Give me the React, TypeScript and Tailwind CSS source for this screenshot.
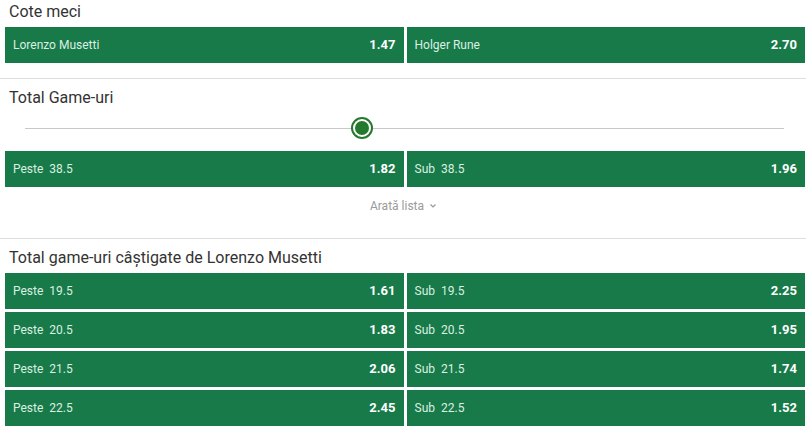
type Odd = { label: string; line?: string; odd: string }

function OddButton({ label, line, odd }: Odd) {
    return (
        <div className="flex-1 h-[36px] bg-[#177a48] flex items-center justify-between px-[8px]">
            <div className="flex items-center gap-[6px] text-[12px] text-[#dcefe3]">
                <span>{label}</span>
                {line && <span>{line}</span>}
            </div>
            <span className="text-[13px] font-bold text-white">{odd}</span>
        </div>
    )
}

function Row({ left, right }: { left: Odd; right: Odd }) {
    return (
        <div className="flex gap-[3px] pl-[5px] pr-[1px]">
            <OddButton {...left} />
            <OddButton {...right} />
        </div>
    )
}

const musetti = [
    ["19.5", "1.61", "2.25"],
    ["20.5", "1.83", "1.95"],
    ["21.5", "2.06", "1.74"],
    ["22.5", "2.45", "1.52"],
]

export default function App() {
    return (
        <div className="w-[806px] h-[430px] bg-white overflow-hidden" style={{ fontFamily: "Roboto, 'Liberation Sans', sans-serif" }}>
            {/* Cote meci */}
            <div className="h-[24px] leading-[24px] pl-[9px] text-[16px] text-[#333]">Cote meci</div>
            <div className="mt-[3px]">
                <Row left={{ label: "Lorenzo Musetti", odd: "1.47" }} right={{ label: "Holger Rune", odd: "2.70" }} />
            </div>
            <div className="mt-[15px] h-px bg-[#dedede]" />

            {/* Total game-uri */}
            <div className="mt-[7px] h-[24px] leading-[24px] pl-[9px] text-[16px] text-[#333]">Total Game-uri</div>
            <div className="h-[36px] flex items-center px-[25px] pr-[22px]">
                <div className="relative flex-1 h-px bg-[#c8c8c8]">
                    <div className="absolute left-[326px] top-[-11px] w-[22px] h-[22px] rounded-full border-2 border-[#25792f] bg-white flex items-center justify-center">
                        <div className="w-[14px] h-[14px] rounded-full bg-[#25792f]" />
                    </div>
                </div>
            </div>
            <div className="mt-[5px]">
                <Row left={{ label: "Peste", line: "38.5", odd: "1.82" }} right={{ label: "Sub", line: "38.5", odd: "1.96" }} />
            </div>
            <div className="mt-[11px] h-[16px] flex items-center justify-center gap-[6px] text-[12px] text-[#9a9a9a]">
                <span>Arată lista</span>
                <svg width="6" height="4" viewBox="0 0 6 4">
                    <path d="M0.5 0.5 L3 3 L5.5 0.5" stroke="#9a9a9a" strokeWidth="1.2" fill="none" />
                </svg>
            </div>
            <div className="mt-[24px] h-px bg-[#dedede]" />

            {/* Musetti */}
            <div className="mt-[7px] h-[24px] leading-[24px] pl-[9px] text-[16px] text-[#333]">Total game-uri câștigate de Lorenzo Musetti</div>
            <div className="mt-[3px] flex flex-col gap-[3px]">
                {musetti.map(([line, over, under]) => (
                    <Row key={line} left={{ label: "Peste", line, odd: over }} right={{ label: "Sub", line, odd: under }} />
                ))}
            </div>
        </div>
    )
}
